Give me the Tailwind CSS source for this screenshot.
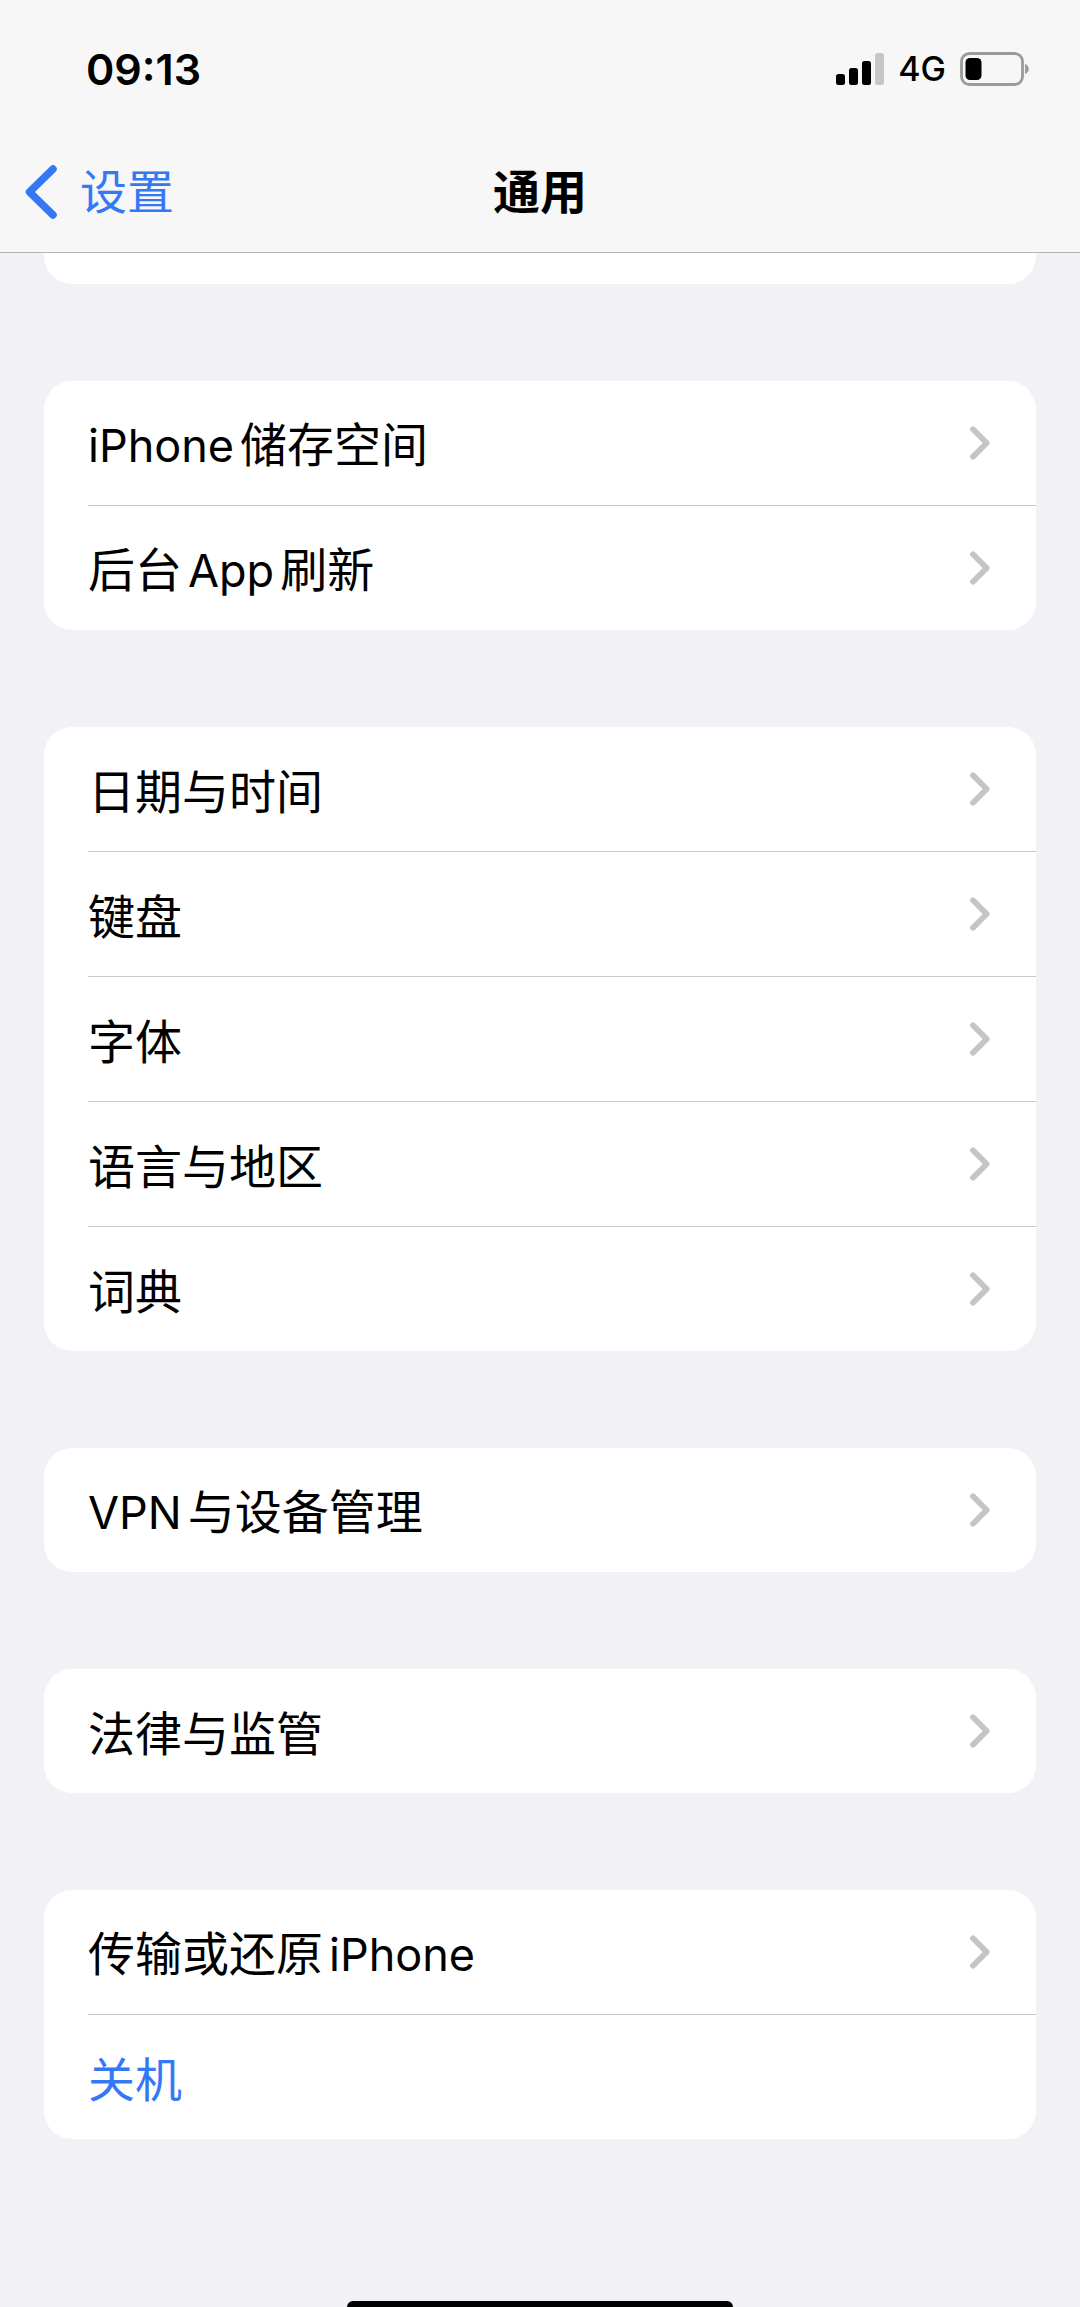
<!DOCTYPE html>
<html lang="zh-CN">
<head>
<meta charset="utf-8">
<meta name="viewport" content="width=device-width, initial-scale=1">
<title>通用</title>
<script src="https://cdn.jsdelivr.net/npm/@tailwindcss/browser@4"></script>
</head>
<body class="flex min-h-screen flex-col bg-[#f1f1f6] font-['Inter','Noto_Sans_CJK_SC',sans-serif] text-[47px] leading-[72px] text-black">
<svg class="hidden" aria-hidden="true">
  <symbol id="chevron" viewBox="0 0 20 34"><path d="M3 3.300 16.700 17 3 30.700" fill="none" stroke="#c5c5c6" stroke-width="5.800" stroke-linecap="round" stroke-linejoin="round"/></symbol>
</svg>

<header class="border-b border-[#b4b4b6] bg-[#f7f7f7]">
  <div class="flex h-[137px] items-center justify-between pr-[50px] pl-[86px]">
    <time class="text-[43px] leading-[56px] font-semibold">09:13</time>
    <div class="flex items-center gap-[14px]">
      <svg class="h-8 w-12" viewBox="0 0 48 32" role="img" aria-label="信号">
        <rect x="0" y="21" width="9" height="11" rx="2.500"/>
        <rect x="13" y="15" width="9" height="17" rx="2.500"/>
        <rect x="26" y="8" width="9" height="24" rx="2.500"/>
        <rect x="39" y="0" width="9" height="32" rx="2.500" fill="#c6c6c6"/>
      </svg>
      <span class="text-[34px] leading-[48px] font-medium">4G</span>
      <svg class="h-[34px] w-[70px]" viewBox="0 0 70 34" role="img" aria-label="电池">
        <rect x="1.500" y="1.500" width="61" height="31" rx="8" fill="none" stroke="#9b9b9b" stroke-width="2.800"/>
        <rect x="5.500" y="6" width="16" height="22" rx="4.500"/>
        <path d="M65 12c5 1.500 5 8.500 0 10z" fill="#9b9b9b"/>
      </svg>
    </div>
  </div>
  <nav class="grid h-[115px] grid-cols-[1fr_auto_1fr] items-start pt-[19px]">
    <a href="#" class="flex items-center gap-[23px] pl-[25px] text-[#3478f6]">
      <svg class="h-[54px] w-8" viewBox="0 0 32 54" aria-hidden="true"><path d="M28 4 4.500 27 28 50" fill="none" stroke="currentColor" stroke-width="7.500" stroke-linecap="round" stroke-linejoin="round"/></svg>
      <span>设置</span>
    </a>
    <h1 class="font-bold">通用</h1>
  </nav>
</header>

<main class="flex flex-col gap-[97px] px-[44px] pb-[96px]">
  <div class="h-[31px] rounded-b-[28px] bg-white"></div>

  <ul class="rounded-[28px] bg-white pl-[44px]">
    <li class="border-b border-[#c9c9cc]"><a href="#" class="flex h-[124px] items-center justify-between pr-[46px]"><span class="flex items-baseline gap-[6px] pt-[5px]"><span class="text-[45px]">iPhone</span>储存空间</span><svg class="h-[34px] w-5"><use href="#chevron"/></svg></a></li>
    <li><a href="#" class="flex h-[124px] items-center justify-between pr-[46px]"><span class="flex items-baseline gap-[6px] pt-[5px]">后台<span class="text-[45px]">App</span>刷新</span><svg class="h-[34px] w-5"><use href="#chevron"/></svg></a></li>
  </ul>

  <ul class="rounded-[28px] bg-white pl-[44px]">
    <li class="border-b border-[#c9c9cc]"><a href="#" class="flex h-[124px] items-center justify-between pr-[46px]"><span class="pt-[5px]">日期与时间</span><svg class="h-[34px] w-5"><use href="#chevron"/></svg></a></li>
    <li class="border-b border-[#c9c9cc]"><a href="#" class="flex h-[124px] items-center justify-between pr-[46px]"><span class="pt-[5px]">键盘</span><svg class="h-[34px] w-5"><use href="#chevron"/></svg></a></li>
    <li class="border-b border-[#c9c9cc]"><a href="#" class="flex h-[124px] items-center justify-between pr-[46px]"><span class="pt-[5px]">字体</span><svg class="h-[34px] w-5"><use href="#chevron"/></svg></a></li>
    <li class="border-b border-[#c9c9cc]"><a href="#" class="flex h-[124px] items-center justify-between pr-[46px]"><span class="pt-[5px]">语言与地区</span><svg class="h-[34px] w-5"><use href="#chevron"/></svg></a></li>
    <li><a href="#" class="flex h-[124px] items-center justify-between pr-[46px]"><span class="pt-[5px]">词典</span><svg class="h-[34px] w-5"><use href="#chevron"/></svg></a></li>
  </ul>

  <ul class="rounded-[28px] bg-white pl-[44px]">
    <li><a href="#" class="flex h-[124px] items-center justify-between pr-[46px]"><span class="flex items-baseline gap-[6px] pt-[5px]"><span class="text-[45px]">VPN</span>与设备管理</span><svg class="h-[34px] w-5"><use href="#chevron"/></svg></a></li>
  </ul>

  <ul class="rounded-[28px] bg-white pl-[44px]">
    <li><a href="#" class="flex h-[124px] items-center justify-between pr-[46px]"><span class="pt-[5px]">法律与监管</span><svg class="h-[34px] w-5"><use href="#chevron"/></svg></a></li>
  </ul>

  <ul class="rounded-[28px] bg-white pl-[44px]">
    <li class="border-b border-[#c9c9cc]"><a href="#" class="flex h-[124px] items-center justify-between pr-[46px]"><span class="flex items-baseline gap-[6px] pt-[5px]">传输或还原<span class="text-[45px]">iPhone</span></span><svg class="h-[34px] w-5"><use href="#chevron"/></svg></a></li>
    <li><button type="button" class="flex h-[124px] w-full items-center text-[#3478f6]"><span class="pt-[5px]">关机</span></button></li>
  </ul>
</main>

<div class="mx-auto mt-auto h-[6px] w-[386px] rounded-t-lg bg-black"></div>
</body>
</html>
